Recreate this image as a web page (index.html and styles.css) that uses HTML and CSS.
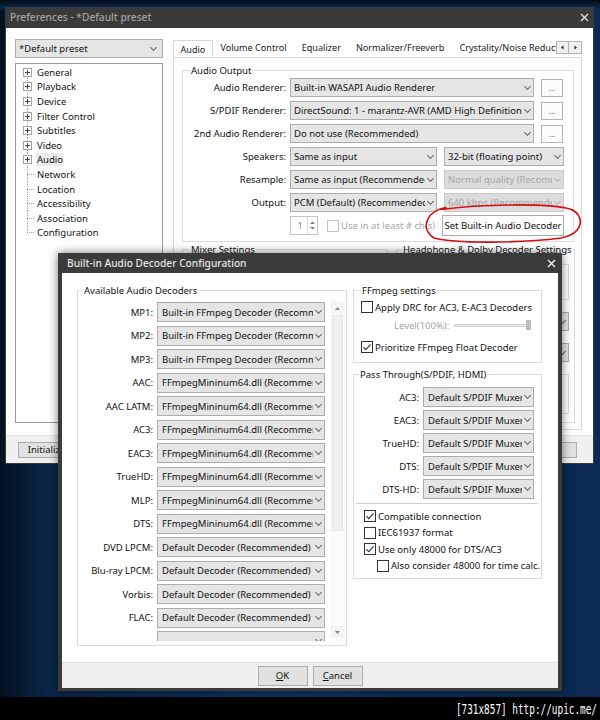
FILE: index.html
```html
<!DOCTYPE html>
<html>
<head>
<meta charset="utf-8">
<link rel="stylesheet" href="styles.css">
</head>
<body>
<div class="screen">
  <div class="desktop">
    <section class="win prefs">
      <header class="titlebar inactive">
        <span class="ttl">Preferences - *Default preset</span>
        <svg class="xbtn" width="9" height="9" viewBox="0 0 9 9"><path d="M1 1l7 7M8 1l-7 7" stroke="#e0e0e0" stroke-width="1.4"/></svg>
      </header>
      <div class="prefs-main">
        <div class="prefs-body">
          <div class="left-col">
            <div class="combo preset"><span class="val">*Default preset</span><i class="chev"></i></div>
            <ul class="tree">
              <li class="first"><span class="tw"><svg width="9" height="9"><rect x=".5" y=".5" width="8" height="8" fill="#fff" stroke="#a3a3a3"/><path d="M2 4.5h5M4.5 2v5" stroke="#444"/></svg></span><span>General</span></li>
              <li><span class="tw"><svg width="9" height="9"><rect x=".5" y=".5" width="8" height="8" fill="#fff" stroke="#a3a3a3"/><path d="M2 4.5h5M4.5 2v5" stroke="#444"/></svg></span><span>Playback</span></li>
              <li><span class="tw"><svg width="9" height="9"><rect x=".5" y=".5" width="8" height="8" fill="#fff" stroke="#a3a3a3"/><path d="M2 4.5h5M4.5 2v5" stroke="#444"/></svg></span><span>Device</span></li>
              <li><span class="tw"><svg width="9" height="9"><rect x=".5" y=".5" width="8" height="8" fill="#fff" stroke="#a3a3a3"/><path d="M2 4.5h5M4.5 2v5" stroke="#444"/></svg></span><span>Filter Control</span></li>
              <li><span class="tw"><svg width="9" height="9"><rect x=".5" y=".5" width="8" height="8" fill="#fff" stroke="#a3a3a3"/><path d="M2 4.5h5M4.5 2v5" stroke="#444"/></svg></span><span>Subtitles</span></li>
              <li><span class="tw"><svg width="9" height="9"><rect x=".5" y=".5" width="8" height="8" fill="#fff" stroke="#a3a3a3"/><path d="M2 4.5h5M4.5 2v5" stroke="#444"/></svg></span><span>Video</span></li>
              <li><span class="tw"><svg width="9" height="9"><rect x=".5" y=".5" width="8" height="8" fill="#fff" stroke="#a3a3a3"/><path d="M2 4.5h5M4.5 2v5" stroke="#444"/></svg></span><span class="sel">Audio</span></li>
              <li class="leaf"><span class="tw"></span><span>Network</span></li>
              <li class="leaf"><span class="tw"></span><span>Location</span></li>
              <li class="leaf"><span class="tw"></span><span>Accessibility</span></li>
              <li class="leaf"><span class="tw"></span><span>Association</span></li>
              <li class="leaf last"><span class="tw"></span><span>Configuration</span></li>
            </ul>
          </div>
          <div class="right-col">
            <div class="tabstrip">
              <div class="tabs">
                <span class="tab sel">Audio</span>
                <span class="tab">Volume Control</span>
                <span class="tab">Equalizer</span>
                <span class="tab">Normalizer/Freeverb</span>
                <span class="tab">Crystality/Noise Reduction</span>
              </div>
              <div class="tabscroll">
                <span class="arr"><svg width="5" height="5" viewBox="0 0 5 5"><path d="M3.5 0.5v4L1 2.5z" fill="#222"/></svg></span>
                <span class="arr"><svg width="5" height="5" viewBox="0 0 5 5"><path d="M1.5 0.5v4L4 2.5z" fill="#222"/></svg></span>
              </div>
            </div>
            <div class="tabpanel">
              <fieldset class="group audio-out">
                <legend>Audio Output</legend>
                <div class="ao-rows">
                  <div class="row"><span class="lbl">Audio Renderer:</span><div class="combo w244"><span class="val">Built-in WASAPI Audio Renderer</span><i class="chev"></i></div><span class="dots">...</span></div>
                  <div class="row"><span class="lbl">S/PDIF Renderer:</span><div class="combo w244"><span class="val">DirectSound: 1 - marantz-AVR (AMD High Definition Audio Device)</span><i class="chev"></i></div><span class="dots">...</span></div>
                  <div class="row"><span class="lbl">2nd Audio Renderer:</span><div class="combo w244"><span class="val">Do not use (Recommended)</span><i class="chev"></i></div><span class="dots">...</span></div>
                  <div class="row"><span class="lbl">Speakers:</span><div class="combo w147"><span class="val">Same as input</span><i class="chev"></i></div><div class="combo w120"><span class="val">32-bit (floating point)</span><i class="chev"></i></div></div>
                  <div class="row"><span class="lbl">Resample:</span><div class="combo w147"><span class="val">Same as input (Recommended)</span><i class="chev"></i></div><div class="combo w120 dis"><span class="val">Normal quality (Recommended)</span><i class="chev"></i></div></div>
                  <div class="row"><span class="lbl">Output:</span><div class="combo w147"><span class="val">PCM (Default) (Recommended)</span><i class="chev"></i></div><div class="combo w120 dis"><span class="val">640 kbps (Recommended)</span><i class="chev"></i></div></div>
                  <div class="row last-row">
                    <span class="lbl"></span>
                    <div class="spin"><span class="num">1</span><span class="spinarr"><svg width="5" height="3" viewBox="0 0 5 3"><path d="M0 3L2.5 0.5 5 3z" fill="#7a7a7a"/></svg><svg width="5" height="3" viewBox="0 0 5 3"><path d="M0 0L2.5 2.5 5 0z" fill="#7a7a7a"/></svg></span></div>
                    <span class="chk dis-chk"><svg class="cb" width="12" height="12" viewBox="0 0 12 12"><rect x=".5" y=".5" width="11" height="11" fill="#fff" stroke="#c4c4c4"/></svg><span>Use in at least # ch(s)</span></span>
                    <span class="btn setbtn">Set Built-in Audio Decoder</span>
                  </div>
                </div>
              </fieldset>
              <div class="groups-row">
                <fieldset class="group mixer">
                  <legend>Mixer Settings</legend>
                  <div class="hid-rows">
                    <div class="combo"><span class="val">Mixer</span><i class="chev"></i></div>
                    <div class="combo"><span class="val">Mixer</span><i class="chev"></i></div>
                  </div>
                </fieldset>
                <fieldset class="group headphone">
                  <legend>Headphone &amp; Dolby Decoder Settings</legend>
                  <div class="hid-rows">
                    <div class="box-in"></div>
                    <div class="combo"><span class="val">Headphone</span><i class="chev"></i></div>
                    <div class="combo"><span class="val">Dolby</span><i class="chev"></i></div>
                    <div class="box-in tall"></div>
                  </div>
                </fieldset>
              </div>
            </div>
          </div>
        </div>
        <footer class="prefs-foot">
          <span class="btn fbtn">Initialize</span>
          <span class="spacer"></span>
          <span class="btn fbtn">OK</span>
          <span class="btn fbtn">Cancel</span>
          <span class="btn fbtn">Apply</span>
        </footer>
      </div>
      <svg class="annot" width="180" height="50" viewBox="418 202 180 50">
        <path d="M447 208.5C430 211 419 228 435 239C458 245 522 244 562 239C586 235 586 215 571 210C548 204 482 205 442 210.5" fill="none" stroke="#d30f12" stroke-width="1.6" stroke-linecap="round"/>
      </svg>
    </section>

    <section class="win dialog">
      <header class="titlebar active">
        <span class="ttl">Built-in Audio Decoder Configuration</span>
        <svg class="xbtn" width="9" height="9" viewBox="0 0 9 9"><path d="M1 1l7 7M8 1l-7 7" stroke="#f2f2f2" stroke-width="1.4"/></svg>
      </header>
      <div class="dlg-main">
        <div class="dlg-body">
          <fieldset class="group decoders">
            <legend>Available Audio Decoders</legend>
            <div class="scroll">
              <div class="dec-rows">
                <span class="lbl">MP1:</span><div class="combo"><span class="val">Built-in FFmpeg Decoder (Recommended)</span><i class="chev"></i></div>
                <span class="lbl">MP2:</span><div class="combo"><span class="val">Built-in FFmpeg Decoder (Recommended)</span><i class="chev"></i></div>
                <span class="lbl">MP3:</span><div class="combo"><span class="val">Built-in FFmpeg Decoder (Recommended)</span><i class="chev"></i></div>
                <span class="lbl">AAC:</span><div class="combo"><span class="val">FFmpegMininum64.dll (Recommended)</span><i class="chev"></i></div>
                <span class="lbl">AAC LATM:</span><div class="combo"><span class="val">FFmpegMininum64.dll (Recommended)</span><i class="chev"></i></div>
                <span class="lbl">AC3:</span><div class="combo"><span class="val">FFmpegMininum64.dll (Recommended)</span><i class="chev"></i></div>
                <span class="lbl">EAC3:</span><div class="combo"><span class="val">FFmpegMininum64.dll (Recommended)</span><i class="chev"></i></div>
                <span class="lbl">TrueHD:</span><div class="combo"><span class="val">FFmpegMininum64.dll (Recommended)</span><i class="chev"></i></div>
                <span class="lbl">MLP:</span><div class="combo"><span class="val">FFmpegMininum64.dll (Recommended)</span><i class="chev"></i></div>
                <span class="lbl">DTS:</span><div class="combo"><span class="val">FFmpegMininum64.dll (Recommended)</span><i class="chev"></i></div>
                <span class="lbl">DVD LPCM:</span><div class="combo"><span class="val">Default Decoder (Recommended)</span><i class="chev"></i></div>
                <span class="lbl">Blu-ray LPCM:</span><div class="combo"><span class="val">Default Decoder (Recommended)</span><i class="chev"></i></div>
                <span class="lbl">Vorbis:</span><div class="combo"><span class="val">Default Decoder (Recommended)</span><i class="chev"></i></div>
                <span class="lbl">FLAC:</span><div class="combo"><span class="val">Default Decoder (Recommended)</span><i class="chev"></i></div>
                <span class="lbl"></span><div class="combo"><span class="val"></span><i class="chev"></i></div>
              </div>
              <div class="vscroll">
                <span class="sarr"><svg width="5" height="3" viewBox="0 0 5 3"><path d="M0 3L2.5 0 5 3z" fill="#8a8a8a"/></svg></span>
                <span class="thumb"></span>
                <span class="strack"></span>
                <span class="sarr"><svg width="5" height="3" viewBox="0 0 5 3"><path d="M0 0L2.5 3 5 0z" fill="#8a8a8a"/></svg></span>
              </div>
            </div>
          </fieldset>

          <div class="dlg-right">
            <fieldset class="group ffmpeg">
              <legend>FFmpeg settings</legend>
              <div class="chk r1"><svg class="cb" width="12" height="12" viewBox="0 0 12 12"><rect x=".5" y=".5" width="11" height="11" fill="#fff" stroke="#333"/></svg><span>Apply DRC for AC3, E-AC3 Decoders</span></div>
              <div class="level"><span class="lvl-lbl">Level(100%):</span><span class="slider"><span class="track"></span><span class="knob"></span></span></div>
              <div class="chk r3"><svg class="cb" width="12" height="12" viewBox="0 0 12 12"><rect x=".5" y=".5" width="11" height="11" fill="#fff" stroke="#333"/><path d="M2.4 6.1l2.4 2.5 4.8-5.2" fill="none" stroke="#333" stroke-width="1.1"/></svg><span>Prioritize FFmpeg Float Decoder</span></div>
            </fieldset>
            <fieldset class="group pass">
              <legend>Pass Through(S/PDIF, HDMI)</legend>
              <div class="pt-rows">
                <span class="lbl">AC3:</span><div class="combo"><span class="val">Default S/PDIF Muxer</span><i class="chev"></i></div>
                <span class="lbl">EAC3:</span><div class="combo"><span class="val">Default S/PDIF Muxer</span><i class="chev"></i></div>
                <span class="lbl">TrueHD:</span><div class="combo"><span class="val">Default S/PDIF Muxer</span><i class="chev"></i></div>
                <span class="lbl">DTS:</span><div class="combo"><span class="val">Default S/PDIF Muxer</span><i class="chev"></i></div>
                <span class="lbl">DTS-HD:</span><div class="combo"><span class="val">Default S/PDIF Muxer</span><i class="chev"></i></div>
              </div>
              <hr class="sep">
              <div class="chks">
                <div class="chk"><svg class="cb" width="12" height="12" viewBox="0 0 12 12"><rect x=".5" y=".5" width="11" height="11" fill="#fff" stroke="#333"/><path d="M2.4 6.1l2.4 2.5 4.8-5.2" fill="none" stroke="#333" stroke-width="1.1"/></svg><span>Compatible connection</span></div>
                <div class="chk"><svg class="cb" width="12" height="12" viewBox="0 0 12 12"><rect x=".5" y=".5" width="11" height="11" fill="#fff" stroke="#333"/></svg><span>IEC61937 format</span></div>
                <div class="chk"><svg class="cb" width="12" height="12" viewBox="0 0 12 12"><rect x=".5" y=".5" width="11" height="11" fill="#fff" stroke="#333"/><path d="M2.4 6.1l2.4 2.5 4.8-5.2" fill="none" stroke="#333" stroke-width="1.1"/></svg><span>Use only 48000 for DTS/AC3</span></div>
                <div class="chk indent"><svg class="cb" width="12" height="12" viewBox="0 0 12 12"><rect x=".5" y=".5" width="11" height="11" fill="#fff" stroke="#333"/></svg><span>Also consider 48000 for time calc.</span></div>
              </div>
            </fieldset>
          </div>
        </div>
        <footer class="dlg-foot">
          <span class="btn dbtn"><u>O</u>K</span>
          <span class="btn dbtn"><u>C</u>ancel</span>
        </footer>
      </div>
    </section>
  </div>
  <div class="watermark"><span>[731x857] http://upic.me/</span></div>
</div>
</body>
</html>
```

FILE: styles.css
```css
* { box-sizing: border-box; margin: 0; padding: 0; }
html, body { width: 600px; height: 720px; overflow: hidden; background: #000; }
body {
  font-family: "Noto Sans", "Open Sans", sans-serif;
  font-size: 9.5px;
  line-height: 13px;
  color: #111;
}
ul { list-style: none; }

.screen { width: 600px; height: 720px; display: flex; flex-direction: column; }
.desktop {
  position: relative;
  height: 697px;
  background:
    linear-gradient(180deg, #050b14 0px, #0a2748 7px, transparent 12px),
    linear-gradient(90deg, #04101f 0px, #0a2548 8%, #0d3262 45%, #0b2c58 75%, #0a2a52 100%);
}
.watermark {
  height: 23px;
  background: #000;
  color: #fff;
  display: flex;
  justify-content: flex-end;
  align-items: center;
  padding-right: 3px;
}
.watermark span {
  font-family: "DejaVu Sans Mono", monospace;
  font-size: 9.4px;
  transform: scale(1, 1.55);
  transform-origin: right center;
}

/* ---------- windows ---------- */
.win { position: absolute; display: flex; flex-direction: column; }
.titlebar {
  display: flex;
  align-items: center;
  justify-content: space-between;
  flex: none;
  font-size: 10.2px;
  font-weight: 500;
  white-space: nowrap;
}
.titlebar.inactive { color: #a2a2a2; }
.titlebar.active { color: #e6e6e6; }

.prefs {
  left: 5px; top: 7px;
  width: 589px; height: 457px;
  background: #3a3a3a;
  padding: 0 1px 1px 1px;
}
.prefs .titlebar { height: 21px; padding: 0 4px 0 4px; }

.prefs-main { flex: 1; background: #fff; display: flex; flex-direction: column; }
.prefs-body {
  flex: 1;
  display: grid;
  grid-template-columns: 148px 409px;
  column-gap: 10px;
  padding: 11px 0 0 9px;
  align-items: start;
}

/* combos */
.combo {
  display: flex;
  align-items: center;
  height: 19px;
  background: #e5e5e5;
  border: 1px solid #adadad;
  padding: 0 2px 0 3px;
  min-width: 0;
}
.combo .val { flex: 1; overflow: hidden; white-space: nowrap; min-width: 0; }
.chev {
  flex: none;
  width: 5px; height: 5px;
  border-right: 1px solid #666;
  border-bottom: 1px solid #666;
  transform: rotate(45deg);
  margin: -3px 1px 0 3px;
}
.combo.dis { background: #dcdcdc; border-color: #cacaca; color: #a4a4a4; }
.combo.dis .chev { border-color: #b3b3b3; }

.preset { width: 148px; height: 19px; margin-bottom: 5px; padding-left: 3px; padding-right: 5px; }

/* tree */
.tree {
  height: 360px;
  border: 1px solid #9a9a9a;
  padding-top: 1px;
}
.tree li { display: flex; align-items: center; height: 14.6px; }
.tw {
  flex: none;
  width: 21px; height: 100%;
  display: flex; align-items: center;
  padding-left: 7px;
  background:
    repeating-linear-gradient(to bottom, #a0a0a0 0 1px, transparent 1px 2px) 11px 0 / 1px 100% no-repeat;
}
.tree li.first .tw { background-position: 11px 100%; background-size: 1px 50%; }
.tree li.leaf .tw {
  background:
    repeating-linear-gradient(to bottom, #a0a0a0 0 1px, transparent 1px 2px) 11px 0 / 1px 100% no-repeat,
    repeating-linear-gradient(to right, #a0a0a0 0 1px, transparent 1px 2px) 11px 50% / 8px 1px no-repeat;
}
.tree li.last .tw {
  background:
    repeating-linear-gradient(to bottom, #a0a0a0 0 1px, transparent 1px 2px) 11px 0 / 1px 50% no-repeat,
    repeating-linear-gradient(to right, #a0a0a0 0 1px, transparent 1px 2px) 11px 50% / 8px 1px no-repeat;
}
.tree .sel { background: #ececec; margin-left: -1px; padding: 0 1px; }

/* tabs */
.tabstrip { display: flex; height: 18px; align-items: flex-end; }
.tabs { display: flex; width: 383px; overflow: hidden; height: 18px; align-items: flex-end; font-size: 9.1px; }
.tab { flex: none; white-space: nowrap; padding: 0 7.5px; line-height: 16px; height: 17px; color: #1a1a1a; }
.tab.sel {
  background: #fff;
  border: 1px solid #d9d9d9;
  border-bottom: none;
  height: 18px;
  padding: 0 6.5px;
  line-height: 17px;
  position: relative;
  z-index: 1;
  margin-bottom: -1px;
}
.tabscroll { display: flex; align-self: flex-start; margin-top: 2px; }
.arr {
  width: 13px; height: 13px;
  background: #f0f0f0;
  border: 1px solid #b4b4b4;
  display: flex; align-items: center; justify-content: center;
}
.arr + .arr { border-left: none; }

.tabpanel {
  border: 1px solid #d9d9d9;
  height: 373px;
  padding: 6px 7px 0 8px;
}

/* group boxes */
.group {
  border: 1px solid #dcdcdc;
  margin: 0;
  min-width: 0;
}
.group legend { padding: 0 1px; margin-left: 7px; line-height: 13px; color: #111; white-space: nowrap; }

.ao-rows { display: flex; flex-direction: column; gap: 4px; padding: 1px 9px 6px 0; }
.row { display: flex; align-items: center; height: 19px; }
.row .lbl { width: 103px; flex: none; text-align: right; margin-right: 4px; white-space: nowrap; }
.w244 { width: 244px; flex: none; }
.w147 { width: 147px; flex: none; }
.w120 { width: 120px; flex: none; margin-left: 7px; }
.dots {
  width: 22px; height: 18px; flex: none;
  margin-left: 7px;
  background: #fbfbfb;
  border: 1px solid #b2b2b2;
  display: flex; align-items: center; justify-content: center;
  font-size: 8px; color: #555; line-height: 10px;
}
.spin {
  width: 28px; height: 19px; flex: none;
  border: 1px solid #c3c3c3;
  display: flex; align-items: center;
  color: #8c8c8c;
}
.spin .num { flex: 1; text-align: right; padding-right: 4px; }
.spinarr {
  width: 10px; height: 100%;
  border-left: 1px solid #e0e0e0;
  display: flex; flex-direction: column; align-items: center; justify-content: center; gap: 3px;
}
.chk { display: flex; align-items: center; white-space: nowrap; }
.cb { flex: none; display: block; }
.chk .cb { margin-right: 2px; }
.dis-chk { margin-left: 9px; color: #a6a6a6; flex: 1; min-width: 0; overflow: hidden; }
.btn {
  display: flex; align-items: center; justify-content: center;
  background: #fdfdfd;
  border: 1px solid #adadad;
  white-space: nowrap;
}
.setbtn { width: 122px; height: 21px; flex: none; margin-left: 0; color: #111; }

.groups-row {
  display: grid;
  grid-template-columns: 206px 179px;
  column-gap: 8px;
  margin-top: 1px;
}
.mixer, .headphone { height: 180px; }
.headphone legend { margin-left: 5px; }
.hid-rows { display: flex; flex-direction: column; gap: 12px; padding: 8px 5px 0 8px; }
.box-in { height: 36px; border: 1px solid #dcdcdc; }
.box-in.tall { height: 40px; }

.prefs-foot {
  height: 28px;
  flex: none;
  background: #f0f0f0;
  border-top: 1px solid #dfdfdf;
  display: flex; align-items: center;
  padding: 0 16px 0 12px;
  gap: 6px;
}
.fbtn { width: 57px; height: 16px; background: #e1e1e1; }
.prefs-foot .spacer { flex: 1; }

.annot { position: absolute; left: 412px; top: 194px; overflow: visible; pointer-events: none; }

/* ---------- dialog ---------- */
.dialog {
  left: 58px; top: 253px;
  width: 504px; height: 438px;
  background: #3b3b3b;
  padding: 0 4px 3px 4px;
  box-shadow: 0 0 9px rgba(0, 0, 0, 0.55);
  z-index: 5;
}
.dialog .titlebar { height: 20px; padding: 0 2px 0 5px; }
.dlg-main { flex: 1; background: #fff; display: flex; flex-direction: column; }
.dlg-body {
  flex: 1;
  display: grid;
  grid-template-columns: 270px 189px;
  column-gap: 6px;
  padding: 11px 0 0 15px;
  align-items: start;
}
.decoders { height: 362px; }
.decoders legend { margin-left: 5px; }
.scroll { display: flex; height: 342px; margin: 2px 1px 0 1px; }
.dec-rows {
  width: 251px;
  height: 100%;
  overflow: hidden;
  display: grid;
  grid-template-columns: 74px 168px;
  grid-auto-rows: 20px;
  row-gap: 3.5px;
  column-gap: 4px;
  align-content: start;
  padding-top: 3px;
}
.dec-rows .lbl, .pt-rows .lbl { text-align: right; align-self: center; white-space: nowrap; }
.dec-rows .combo, .pt-rows .combo { height: 20px; padding-left: 4px; }
.vscroll {
  width: 15px; height: 100%;
  background: #fbfbfb;
  display: flex; flex-direction: column; align-items: center;
  padding: 3px 0 3px 0;
}
.sarr { height: 12px; width: 13px; display: flex; align-items: center; justify-content: center; background: #f3f3f3; flex: none; }
.thumb { width: 11px; height: 216px; background: #f0f0f0; border: 1px solid #e6e6e6; margin-top: 1px; flex: none; }
.strack { flex: 1; }

.dlg-right { display: flex; flex-direction: column; gap: 5px; }
.ffmpeg { height: 79px; padding: 2px 0 0 7px; }
.ffmpeg legend { margin-left: 0; }
.ffmpeg .chk { height: 16px; }
.level { height: 16px; display: flex; align-items: center; margin-top: 2px; }
.lvl-lbl { color: #a3a3a3; margin-left: 33px; width: 60px; }
.slider { position: relative; width: 78px; height: 10px; display: flex; align-items: center; }
.track { width: 76px; height: 3px; background: #e3e3e3; border: 1px solid #d6d6d6; }
.knob { position: absolute; right: 1px; top: 0; width: 5px; height: 10px; background: #bdbdbd; }
.ffmpeg .r3 { margin-top: 6px; }

.pass { height: 211px; }
.pass legend { margin-left: 5px; }
.pt-rows {
  display: grid;
  grid-template-columns: 65px 111px;
  column-gap: 4px;
  grid-auto-rows: 20px;
  row-gap: 3px;
  padding-top: 6px;
}
.sep { border: none; border-top: 1px solid #cfcfcf; margin: 4px 3px 4px 2px; }
.chks { display: flex; flex-direction: column; padding-left: 10px; }
.chks .chk { height: 16.5px; }
.chks .indent { padding-left: 13px; }

.dlg-foot {
  height: 26px;
  flex: none;
  background: #f0f0f0;
  border-top: 1px solid #e2e2e2;
  display: flex; align-items: center; justify-content: center;
  gap: 5px;
}
.dbtn { width: 50px; height: 20px; background: #e1e1e1; }
.dbtn u { text-decoration: underline; }
```
